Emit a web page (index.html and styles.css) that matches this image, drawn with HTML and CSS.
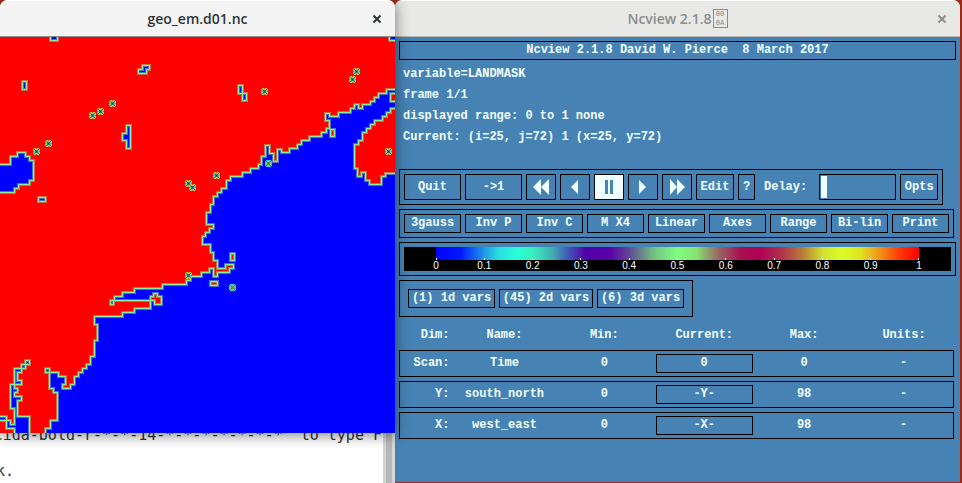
FILE: index.html
```html
<!DOCTYPE html>
<html lang="en">
<head>
<meta charset="utf-8">
<title>Ncview 2.1.8</title>
<link rel="stylesheet" href="styles.css">
</head>
<body>
<main class="desktop">
  <div class="left">
    <section class="window map-window">
      <header class="titlebar">
        <h2>geo_em.d01.nc</h2>
        <button class="close" aria-label="Close map"><svg viewBox="0 0 10 10"><path d="M1.500 1.500l7 7M8.500 1.500l-7 7"/></svg></button>
      </header>
      <svg class="map" viewBox="0 37 395 396" role="img" aria-label="LANDMASK">
        <defs>
          <g id="lake"><path class="y" d="M-3.500-2.500h1v-1h5v1h1v5h-1v1h-5v-1h-1z"/><path class="r" d="M-3.500 0h7M0-3.500v7"/><path class="g" d="M-2.500-2.500h5v5h-5z"/><path class="d" d="M-2.500-2.500l5 5M-2.500 2.500l5-5"/><path class="b" d="M-1-1h2v2h-2z"/></g>
          <g id="isle"><path class="c" d="M-3.500-2.500h1v-1h5v1h1v5h-1v1h-5v-1h-1z"/><path class="g" d="M-2.500-2.500h5v5h-5z"/><path class="d" d="M-2.500-2.500l5 5M-2.500 2.500l5-5"/><path class="o" d="M-1-1h2v2h-2z"/></g>
          <path id="coast" d="M400 90H387V94H379V98H375V102H371V105H363V109H359V105H355V109H351V113H339V117H330V114H326V121H330V129H327V133H322V137H310V141H302V145H298V149H290V153H282V150H278V162H274V154H270V146H266V157H262V165H259V169H251V173H243V177H231V181H227V189H222V193H218V197H214V205H211V213H207V225H214V229H210V233H206V237H203V245H211V253H214V261H218V269H226V265H234V269H230V273H218V277H214V269H210V273H202V277H191V281H187V285H163V289H135V293H123V297H115V301H111V305H114V301H151V297H154V294H158V297H162V305H155V301H151V309H135V313H123V317H95V325H98V341H95V357H91V365H87V369H83V373H79V377H75V385H71V389H63V385H66V377H59V373H50V369H46V373H50V389H54V393H58V421H51V429H46V438H400Z"/>
          <path id="gulf" d="M400 109H391V113H387V117H383V121H375V125H371V129H367V133H363V141H359V145H355V169H358V177H362V173H366V181H370V185H382V177H386V174H400Z"/>
          <path id="waters" d="M-5 165H11V157H18V153H26V157H30V161H34V181H30V185H19V189H15V193H-5ZM51 34V41H58V34ZM400 34H390V41H400ZM23 82H27V90H23ZM143 66H150V70H147V74H139V70H143ZM127 126H131V149H127V141H123V134H127ZM39 198H46V202H39ZM239 86H243V94H247V101H243V94H239ZM26 361H30V365H26V369H22V373H18V381H22V385H15V389H18V393H15V397H22V401H18V417H30V438H15V429H7V421H-5V417H7V421H11V425H15V409H11V385H15V369H22V365H26Z"/>
          <path id="lands" d="M331 130H335V137H331ZM400 94H391V102H400ZM231 254H235V261H231ZM211 282H218V286H211Z"/>
        </defs>
        <path class="land" d="M0 37H395V433H0z"/>
        <g transform="translate(-.5 -.5)">
          <use href="#coast" class="sea"/><use href="#gulf" class="land"/><use href="#waters" class="sea"/><use href="#lands" class="land"/>
          <g class="halo"><use href="#coast"/><use href="#gulf"/><use href="#waters"/><use href="#lands"/></g>
          <g class="line"><use href="#coast"/><use href="#gulf"/><use href="#waters"/><use href="#lands"/></g>
        </g>
        <g transform="translate(.5 .5)">
          <use href="#lake" x="112" y="103"/><use href="#lake" x="100" y="111"/><use href="#lake" x="92" y="115"/>
          <use href="#lake" x="48" y="143"/><use href="#lake" x="36" y="151"/><use href="#lake" x="264" y="91"/>
          <use href="#lake" x="356" y="71"/><use href="#lake" x="352" y="79"/><use href="#lake" x="388" y="151"/>
          <use href="#lake" x="216" y="175"/><use href="#lake" x="188" y="183"/><use href="#lake" x="192" y="187"/>
          <use href="#lake" x="188" y="275"/><use href="#isle" x="268" y="163"/><use href="#isle" x="232" y="287"/>
        </g>
      </svg>
    </section>
    <div class="terminal">
      <pre>cida-bold-r-*-*-14-*-*-*-*-*-*-*" to type F</pre>
      <pre class="last">k.</pre>
    </div>
  </div>

  <section class="window ncview">
    <header class="titlebar">
      <h1>Ncview 2.1.8<span class="tofu"><span>00</span><span>0A</span></span></h1>
      <button class="close" aria-label="Close Ncview"><svg viewBox="0 0 10 10"><path d="M1.500 1.500l7 7M8.500 1.500l-7 7"/></svg></button>
    </header>
    <div class="panel">
      <p class="banner">Ncview 2.1.8 David W. Pierce&nbsp; 8 March 2017</p>
      <div class="status">
        <p>variable=LANDMASK</p>
        <p>frame 1/1</p>
        <p>displayed range: 0 to 1 none</p>
        <p>Current: (i=25, j=72) 1 (x=25, y=72)</p>
      </div>

      <div class="box controls">
        <button class="wide">Quit</button>
        <button class="wide">-&gt;1</button>
        <button class="icon" aria-label="Rewind"><svg viewBox="0 0 28 24"><path d="M6 12L14 4v16zM14 12l8-8v16z"/></svg></button>
        <button class="icon" aria-label="Step back"><svg viewBox="0 0 28 24"><path d="M10 12l7-7v14z"/></svg></button>
        <button class="icon active" aria-label="Pause"><svg viewBox="0 0 28 24"><path d="M10 5h3v14h-3zM15 5h3v14h-3z"/></svg></button>
        <button class="icon" aria-label="Step forward"><svg viewBox="0 0 28 24"><path d="M17 12l-7-7v14z"/></svg></button>
        <button class="icon" aria-label="Fast forward"><svg viewBox="0 0 28 24"><path d="M22 12L14 4v16zM14 12L7 4v16z"/></svg></button>
        <button class="mid">Edit</button>
        <button class="tiny">?</button>
        <label for="delay">Delay:</label>
        <input id="delay" type="text">
        <button class="mid">Opts</button>
      </div>

      <div class="box options">
        <button class="wide">3gauss</button>
        <button class="wide">Inv P</button>
        <button class="wide">Inv C</button>
        <button class="wide">M X4</button>
        <button class="wide">Linear</button>
        <button class="wide">Axes</button>
        <button class="wide">Range</button>
        <button class="wide">Bi-lin</button>
        <button class="wide">Print</button>
      </div>

      <div class="box scale">
        <div class="legend">
          <div class="ramp"></div>
          <ol class="ticks">
            <li>0</li><li>0.1</li><li>0.2</li><li>0.3</li><li>0.4</li><li>0.5</li><li>0.6</li><li>0.7</li><li>0.8</li><li>0.9</li><li>1</li>
          </ol>
        </div>
      </div>

      <div class="box vars">
        <button>(1) 1d vars</button>
        <button>(45) 2d vars</button>
        <button>(6) 3d vars</button>
      </div>

      <table class="dims">
        <colgroup><col class="c-dim"><col class="c-name"><col class="c-min"><col class="c-cur"><col class="c-max"><col></colgroup>
        <thead><tr><th>Dim:</th><th>Name:</th><th>Min:</th><th>Current:</th><th>Max:</th><th>Units:</th></tr></thead>
        <tbody>
          <tr><td>Scan:</td><td>Time</td><td>0</td><td><button>0</button></td><td>0</td><td>-</td></tr>
          <tr><td>Y:</td><td>south_north</td><td>0</td><td><button>-Y-</button></td><td>98</td><td>-</td></tr>
          <tr><td>X:</td><td>west_east</td><td>0</td><td><button>-X-</button></td><td>98</td><td>-</td></tr>
        </tbody>
      </table>
    </div>
  </section>
</main>
</body>
</html>
```

FILE: styles.css
```css
* { box-sizing: border-box; }

body {
  margin: 0;
  background: #a32a12;
}

h1, h2, p, pre, ol { margin: 0; padding: 0; }

.desktop {
  display: grid;
  grid-template-columns: minmax(0, 395fr) minmax(0, 567fr);
  min-height: 100vh;
  overflow: hidden;
}

.left {
  display: flex;
  flex-direction: column;
  position: relative;
  z-index: 1;
}

.titlebar {
  display: grid;
  grid-template-columns: 36px 1fr 36px;
  align-items: center;
  height: 37px;
  border-top: 1px solid #fff;
  border-bottom: 1px solid #8c8c8a;
  border-radius: 7px 7px 0 0;
  background: #f4f4f4;
  color: #2e3436;
}

.titlebar h1,
.titlebar h2 {
  grid-column: 2;
  display: flex;
  justify-content: center;
  align-items: center;
  font: 600 14px/20px "Open Sans", "Noto Sans", sans-serif;
}

.close {
  padding: 0;
  border: 0;
  background: none;
  color: inherit;
  line-height: 0;
}

.close svg {
  width: 10px;
  height: 10px;
  fill: none;
  stroke: currentColor;
  stroke-width: 2;
}

.map-window {
  position: relative;
  z-index: 1;
  box-shadow: 0 2px 14px rgba(0, 0, 0, 0.5);
  border-radius: 7px 7px 0 0;
}

.map { display: block; width: 100%; }
.land { fill: #f00; }
.sea { fill: #00f; }
.halo { fill: none; stroke: rgba(128, 240, 128, 0.5); stroke-width: 3; }
.line { fill: none; stroke: #88f098; stroke-width: 1; }
.y { fill: #c8c820; }
.c { fill: #28d0e0; }
.r { stroke: #c86018; stroke-width: 1; }
.b { fill: #2020c0; }
.g { fill: #70d090; }
.d { stroke: #605870; stroke-width: 1; }
.o { fill: #d04020; }

.terminal {
  flex: 1;
  height: 50px;
  padding: 0 13px 0 0;
  overflow: hidden;
  background: linear-gradient(to left, #d4d6d4 3px, #b4b8b6 3px 9px, #d4d6d4 9px 12px, #fff 12px);
  color: #2e3436;
}

.terminal pre {
  display: flex;
  justify-content: flex-end;
  margin-top: -7px;
  font: 15px/18px "DejaVu Sans Mono", monospace;
}

.terminal .last { justify-content: flex-start; margin-top: 18px; margin-left: -4px; }

.ncview {
  display: flex;
  flex-direction: column;
  margin: 0 2px 1px 0;
  border-radius: 7px 7px 0 0;
  background: #4682b4;
}

.ncview .titlebar {
  background: #e8e8e6;
  border-bottom-color: #b4b4b0;
  color: #8b8e8f;
}

.tofu {
  display: grid;
  width: 15px;
  height: 19px;
  margin-left: 1px;
  border: 1px solid currentColor;
  font: 7px/8px "DejaVu Sans Mono", monospace;
  text-align: center;
}

.panel {
  display: flex;
  flex-direction: column;
  align-items: flex-start;
  gap: 4px;
  padding: 4px;
  color: #f0ffff;
  font: bold 12px/17px "Liberation Mono", monospace;
}

.banner {
  width: 100%;
  border: 1px solid #000;
  text-align: center;
}

.status {
  padding: 0 0 17px 4px;
  line-height: 21px;
}

.box {
  display: flex;
  gap: 4px;
  padding: 4px;
  border: 1px solid #000;
}

.panel button,
.panel input {
  padding: 0;
  border: 1px solid #000;
  border-radius: 0;
  background: #4682b4;
  color: inherit;
  font: inherit;
  white-space: nowrap;
}

.controls button, .controls input { height: 26px; }
.controls { align-items: center; }
.wide { width: 57px; }
.panel .icon { width: 30px; line-height: 0; }
.icon svg { display: block; width: 28px; height: 24px; fill: currentColor; }
.panel .active { background: #f0ffff; color: #4682b4; }
.mid { width: 38px; }
.tiny { width: 17px; }
.controls label { padding: 0 8px 0 5px; }

.panel .controls input {
  width: 77px;
  background: linear-gradient(#f0ffff, #f0ffff) 1px 1px / 6px 22px no-repeat #4682b4;
}

.scale { width: 100%; }

.legend {
  flex: 1;
  height: 24px;
  padding: 0 32px;
  background: #000;
}

.ramp {
  height: 13px;
  background: linear-gradient(to right,
    #00f 0, #0018ff 5%, #2098e8 10%, #28e0e0 13%, #28ffd8 17%, #38f0c0 20%,
    #40b0b0 24%, #4060b8 27%, #5000a8 31%, #5800a8 36%, #604898 40%,
    #70c080 45%, #80ff80 50%, #88e070 54%, #987068 58%, #a81050 63%,
    #b00058 67%, #b03848 72%, #b88038 76%, #d0e030 80%, #d8ff28 84%,
    #e0e020 88%, #f09018 92%, #ff3808 96%, #f00 100%);
}

.ticks {
  display: flex;
  justify-content: space-between;
  list-style: none;
  color: #fff;
  font: 10px/11px "Liberation Sans", sans-serif;
}

.ticks li {
  display: flex;
  flex-direction: column;
  align-items: center;
  width: 0;
}

.ticks li::before {
  content: "";
  width: 1px;
  height: 2px;
  margin-top: -2px;
  background: #fff;
}

.vars { padding: 8px; }
.vars button { width: 87px; }
.vars button:nth-child(2) { width: 94px; }

.dims {
  width: calc(100% - 2px);
  table-layout: fixed;
  border-collapse: separate;
  border-spacing: 0 4px;
  margin-top: -4px;
  text-align: center;
}

.dims th, .dims td { padding: 0; }
.dims th { height: 25px; padding-top: 4px; }
.dims td { height: 27px; border: 1px solid #000; border-width: 1px 0; }
.dims td:first-child { border-left-width: 1px; }
.dims td:last-child { border-right-width: 1px; }
.dims th:first-child, .dims td:first-child { padding-right: 5px; text-align: right; }
.dims button { display: block; width: 97px; margin: 0 auto; }
.c-dim { width: 10%; }
.c-name { width: 18%; }
.c-min { width: 18%; }
.c-cur { width: 18%; }
.c-max { width: 18%; }
```
